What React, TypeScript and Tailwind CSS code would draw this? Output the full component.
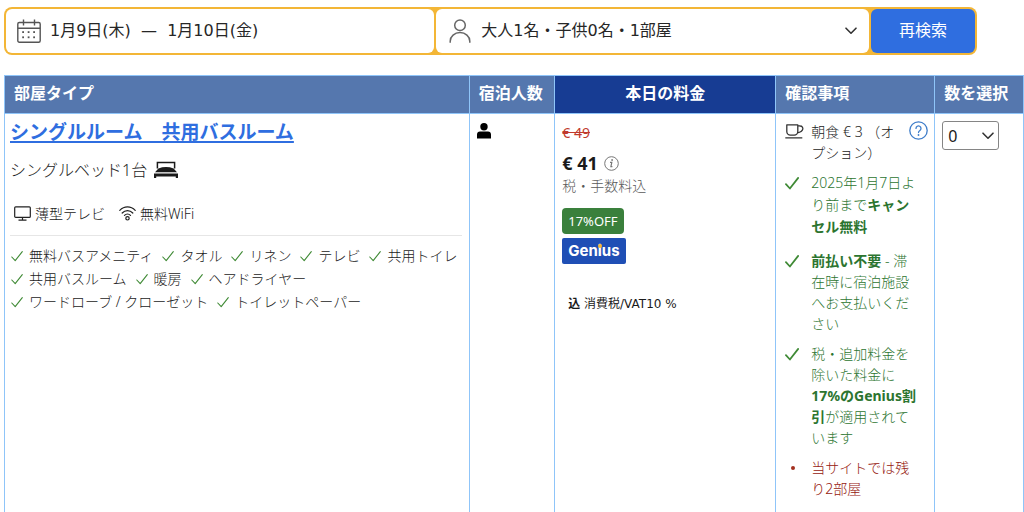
import React, { useState } from 'react';

const jp = 'font-[family-name:Noto_Sans,Noto_Sans_CJK_JP,sans-serif]';
const wide = 'font-[family-name:DejaVu_Sans,Noto_Sans_CJK_JP,sans-serif]';

const facilities: string[] = [
  '無料バスアメニティ',
  'タオル',
  'リネン',
  'テレビ',
  '共用トイレ',
  '共用バスルーム',
  '暖房',
  'ヘアドライヤー',
  'ワードローブ / クローゼット',
  'トイレットペーパー',
];

const CalendarIcon = () => (
  <svg width="24" height="24" viewBox="0 0 24 24" fill="none" stroke="#555" strokeWidth="1.4" className="shrink-0">
    <rect x="0.8" y="3.5" width="22.4" height="19.7" rx="1.5" />
    <path d="M0.8 9.2h22.4M6.5 0.5v6M17.5 0.5v6" />
    <g fill="#555" stroke="none">
      {[5.7, 11.2, 16.7].map((x) => (
        <React.Fragment key={x}>
          <rect x={x - 0.5} y="12.2" width="1.8" height="1.8" />
          <rect x={x - 0.5} y="17.4" width="1.8" height="1.8" />
        </React.Fragment>
      ))}
    </g>
  </svg>
);

const GuestIcon = () => (
  <svg width="22" height="24" viewBox="0 0 22 24" fill="none" stroke="#666" strokeWidth="1.5" className="shrink-0">
    <circle cx="11" cy="6.2" r="5.3" />
    <path d="M1.2 23.8v-1.6a9.8 8.6 0 0 1 19.6 0v1.6" />
  </svg>
);

const Chevron = ({ className }: { className?: string }) => (
  <svg width="12" height="8" viewBox="0 0 12 8" fill="none" stroke="#333" strokeWidth="1.6" strokeLinecap="round" strokeLinejoin="round" className={className}>
    <path d="M1 1.2l5 5 5-5" />
  </svg>
);

const BedIcon = () => (
  <svg width="24" height="18" viewBox="0 0 24 18" fill="#1a1a1a" className="shrink-0">
    <path d="M3.4 7.4V1.6h17.2v5.8" fill="none" stroke="#1a1a1a" strokeWidth="1.5" />
    <path d="M4.4 7.4q7.6-2.6 15.2 0l3.4 3.8H1z" />
    <path d="M0 12.4h24V17h-2.2v-1.4H2.2V17H0z" />
  </svg>
);

const TvIcon = () => (
  <svg width="17" height="15" viewBox="0 0 17 15" fill="none" stroke="#222" strokeWidth="1.2" className="shrink-0">
    <rect x="0.7" y="0.8" width="15.6" height="10.6" rx="1" />
    <path d="M8.5 11.4v2.7M4.5 14.1h8" />
  </svg>
);

const WifiIcon = () => (
  <svg width="17" height="15" viewBox="0 0 17 15" fill="none" stroke="#222" strokeWidth="1.2" strokeLinecap="round" className="shrink-0">
    <path d="M0.8 4.4c4.4-4.6 11-4.6 15.4 0M3.2 7c3-3.2 7.6-3.2 10.6 0M5.5 9.4c1.7-1.9 4.3-1.9 6 0" />
    <circle cx="8.5" cy="12.3" r="1.7" />
  </svg>
);

const Check = ({ size = 12 }: { size?: number }) => (
  <svg width={size} height={size} viewBox="0 0 12 12" fill="none" stroke="#3f8a35" strokeWidth={size > 12 ? 1.5 : 1.1} strokeLinecap="round" strokeLinejoin="round" className="shrink-0">
    <path d="M0.8 7l3.4 3.7L11.3 1.6" />
  </svg>
);

const PersonIcon = () => (
  <svg width="14" height="16" viewBox="0 0 14 16" fill="#000" role="img" aria-label="1名">
    <circle cx="7" cy="3.8" r="3.7" />
    <path d="M0 15.5v-4A3 3 0 0 1 3 8.6h8a3 3 0 0 1 3 2.9v4z" />
  </svg>
);

const InfoIcon = () => (
  <svg width="15" height="15" viewBox="0 0 15 15" fill="none" stroke="#777" className="shrink-0">
    <circle cx="7.5" cy="7.5" r="6.8" strokeWidth="1" />
    <path d="M6 6.3h1.8l-0.9 4.4h1.5" strokeWidth="1.2" />
    <circle cx="8.1" cy="4" r="0.9" fill="#777" stroke="none" />
  </svg>
);

const CupIcon = () => (
  <svg width="19" height="15" viewBox="0 0 19 15" fill="none" stroke="#333" strokeWidth="1.3" strokeLinejoin="round" className="shrink-0">
    <path d="M1.8 0.8h11v6.8a3.6 3.6 0 0 1-3.6 3.6H5.4a3.6 3.6 0 0 1-3.6-3.6zM12.8 1.6l2.6 0.4a2.6 2.6 0 0 1 2.4 3.2c-0.6 2.4-2.8 3.2-5.4 3.6M0.3 13.8h17" />
  </svg>
);

const HelpIcon = () => (
  <svg width="19" height="19" viewBox="0 0 19 19" fill="none" stroke="#3d7cc9" className="shrink-0">
    <circle cx="9.5" cy="9.5" r="8.7" strokeWidth="1.3" />
    <path d="M7 7.4a2.5 2.5 0 1 1 3.9 2.1c-0.9 0.6-1.4 1-1.4 2" strokeWidth="1.3" strokeLinecap="round" />
    <circle cx="9.5" cy="14" r="0.9" fill="#3d7cc9" stroke="none" />
  </svg>
);

interface ConditionProps {
  icon: React.ReactNode;
  className?: string;
  children: React.ReactNode;
}

const Condition = ({ icon, className = '', children }: ConditionProps) => (
  <li className={`flex ${className}`}>
    <span className="flex h-[21px] w-[26px] shrink-0 items-center">{icon}</span>
    {children}
  </li>
);

const SearchBar = () => (
  <form onSubmit={(e) => e.preventDefault()} className={`ml-1 mr-[47px] grid h-12 grid-cols-[99fr_100fr_104px] gap-[2px] rounded-lg bg-[#f3b636] p-[2px] text-base font-normal text-[#262626] ${wide}`}>
    <button type="button" className="flex items-center gap-[9px] rounded-md bg-white pl-[11px] text-left">
      <CalendarIcon />
      <span className="whitespace-pre">1月9日(木)  —  1月10日(金)</span>
    </button>
    <label className="relative flex items-center rounded-md bg-white pl-[13px]">
      <GuestIcon />
      <select aria-label="宿泊人数と部屋数" className="h-full flex-1 appearance-none bg-transparent pl-[10px] outline-none">
        <option>大人1名・子供0名・1部屋</option>
      </select>
      <Chevron className="pointer-events-none absolute right-3" />
    </label>
    <button type="submit" className="rounded-md bg-[#2f6ee0] text-white">再検索</button>
  </form>
);

const App: React.FC = () => {
  const [rooms, setRooms] = useState('0');

  return (
    <div className={`flex min-h-screen flex-col bg-white pt-[7px] font-light text-[#1a1a1a] ${jp}`}>
      <SearchBar />

      <div className="mt-5 ml-1 grid flex-1">
        <table className="w-full table-fixed border-collapse text-left text-sm">
          <colgroup>
            <col className="w-[45.6%]" />
            <col className="w-[8.4%]" />
            <col className="w-[21.7%]" />
            <col className="w-[15.6%]" />
            <col />
          </colgroup>
          <thead>
            <tr className="h-[38px] whitespace-nowrap bg-[#5577ae] text-base text-white *:border *:border-[#8fc5f9] *:pt-0 *:pb-[3px] *:font-bold">
              <th scope="col" className="pl-[9px]">部屋タイプ</th>
              <th scope="col" className="pl-[9px]">宿泊人数</th>
              <th scope="col" className="bg-[#173c93] text-center">本日の料金</th>
              <th scope="col" className="pl-[9px]">確認事項</th>
              <th scope="col" className="pl-[9px]">数を選択</th>
            </tr>
          </thead>
          <tbody>
            <tr className="align-top *:border-x *:border-[#8fc5f9]">
              <td className="pt-1 pr-[7px] pl-[5px]">
                <a href="#room" className="text-[19px] leading-7 font-bold text-[#2f6ee0] underline decoration-2 underline-offset-2">
                  シングルルーム　共用バスルーム
                </a>
                <div className="mt-3 flex items-center gap-[7px] text-base">
                  シングルベッド1台
                  <BedIcon />
                </div>
                <ul className="mt-5 flex gap-[14px] pl-1 leading-[23px]">
                  <li className="flex items-center gap-1"><TvIcon />薄型テレビ</li>
                  <li className="flex items-center gap-1"><WifiIcon />無料WiFi</li>
                </ul>
                <ul className="mt-[10px] flex flex-wrap gap-x-[9px] border-t border-[#e6e6e6] pt-2 pl-px leading-[23px]">
                  {facilities.map((name) => (
                    <li key={name} className="flex items-center gap-[6px]">
                      <Check />
                      {name}
                    </li>
                  ))}
                </ul>
              </td>

              <td className="pt-[9px] pl-[7px]">
                <PersonIcon />
              </td>

              <td className="pt-2 pl-[7px]">
                <del className="block leading-[21px] font-normal text-[#c0392b]">€ 49</del>
                <div className="mt-2 flex items-center gap-[6px] text-lg leading-6 font-bold text-[#1a1a1a]">
                  € 41
                  <InfoIcon />
                </div>
                <p className="leading-[21px] text-[#595959]">税・手数料込</p>
                <div className="mt-3 flex flex-col items-start gap-1">
                  <span className="rounded bg-[#3a803c] px-[6px] text-[13px] leading-[26px] font-normal text-white">17%OFF</span>
                  <span className="rounded-xs bg-[#1f4fb5] px-[6px] font-[family-name:Inter,sans-serif] text-[15px] leading-[26px] font-bold text-white">
                    Gen
                    <span className="relative inline-block leading-none">
                      i
                      <span className="absolute top-[1px] left-0 size-1 rounded-full bg-[#f7b731]" />
                    </span>
                    us
                  </span>
                </div>
                <p className={`mt-[30px] ml-[6px] text-xs leading-[21px] font-normal ${wide}`}>
                  <b className="font-bold">込</b> 消費税/VAT10 %
                </p>
              </td>

              <td className="pt-[7px] pr-[6px] pl-[9px]">
                <ul className="flex flex-col gap-[9px] leading-[21px] text-[#2c7530]">
                  <Condition icon={<CupIcon />} className="text-[#1a1a1a]">
                    <span className="mr-2 min-w-0 flex-1">朝食 € 3 （オプション）</span>
                    <button type="button" aria-label="朝食について" className="self-start">
                      <HelpIcon />
                    </button>
                  </Condition>
                  <Condition icon={<Check size={14} />} className="pr-2 pb-[3px] leading-[22px]">
                    <span>2025年1月7日より前まで<b className="font-bold">キャンセル無料</b></span>
                  </Condition>
                  <Condition icon={<Check size={14} />} className="pr-2">
                    <span><b className="font-bold">前払い不要</b> - 滞在時に宿泊施設へお支払いください</span>
                  </Condition>
                  <Condition icon={<Check size={14} />} className="pr-2">
                    <span>税・追加料金を除いた料金に<b className="font-bold">17%のGenius割引</b>が適用されています</span>
                  </Condition>
                  <Condition icon={<span className="ml-[6px] size-1 rounded-full bg-[#a3301f]" />} className="pr-2 text-[#96200f]">
                    <span>当サイトでは残り2部屋</span>
                  </Condition>
                </ul>
              </td>

              <td className="pt-[7px] pl-[7px]">
                <label className="relative inline-flex items-center">
                  <select
                    aria-label="数を選択"
                    value={rooms}
                    onChange={(e) => setRooms(e.target.value)}
                    className="h-[29px] w-[57px] appearance-none rounded-[3px] border border-[#858585] bg-white pl-[5px] text-base leading-6 font-normal"
                  >
                    <option>0</option>
                    <option>1</option>
                    <option>2</option>
                  </select>
                  <Chevron className="pointer-events-none absolute right-[5px]" />
                </label>
              </td>
            </tr>
          </tbody>
        </table>
      </div>
    </div>
  );
};

export default App;
